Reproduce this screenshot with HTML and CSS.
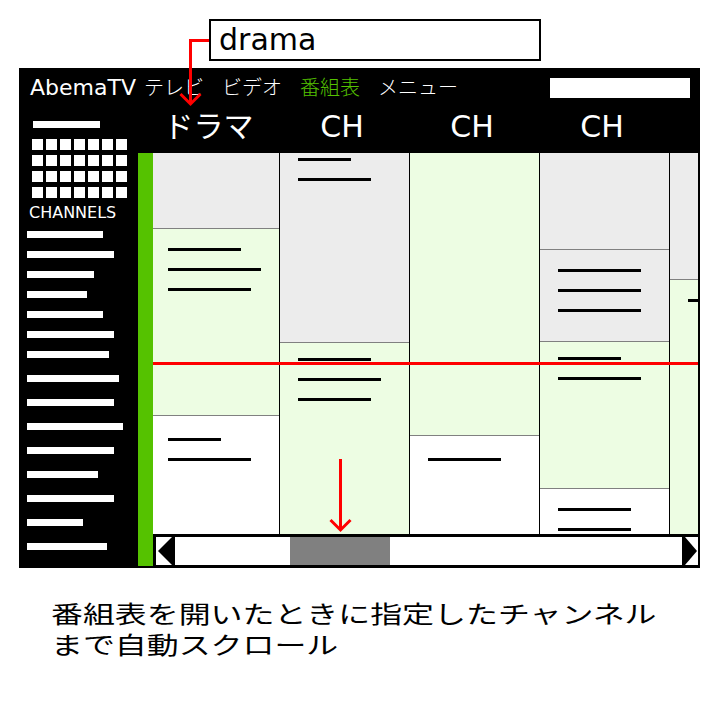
FILE: index.html
```html
<!DOCTYPE html>
<html lang="ja">
<head>
    <meta charset="UTF-8">
    <meta name="viewport" content="width=device-width, initial-scale=1.0">
    <title>番組表 自動スクロール</title>
    <link rel="stylesheet" href="styles.css">
</head>
<body>

<div class="sheet">
    <div class="note">drama</div>

    <div class="frame">
        <header class="topbar">
            <span class="logo">AbemaTV</span>
            <nav class="nav">
                <span>テレビ</span>
                <span>ビデオ</span>
                <span class="on">番組表</span>
                <span>メニュー</span>
            </nav>
            <div class="search"></div>
        </header>

        <div class="body">
            <aside class="side">
                <div class="side-line"></div>
                <div class="side-grid">
                    <span></span><span></span><span></span><span></span><span></span><span></span><span></span>
                    <span></span><span></span><span></span><span></span><span></span><span></span><span></span>
                    <span></span><span></span><span></span><span></span><span></span><span></span><span></span>
                    <span></span><span></span><span></span><span></span><span></span><span></span><span></span>
                </div>
                <div class="side-title">CHANNELS</div>
                <ul class="side-list">
                    <li style="width: 76px"></li>
                    <li style="width: 87px"></li>
                    <li style="width: 67px"></li>
                    <li style="width: 60px"></li>
                    <li style="width: 76px"></li>
                    <li style="width: 87px"></li>
                    <li style="width: 82px"></li>
                </ul>
                <ul class="side-list wide">
                    <li style="width: 92px"></li>
                    <li style="width: 87px"></li>
                    <li style="width: 96px"></li>
                    <li style="width: 87px"></li>
                    <li style="width: 71px"></li>
                    <li style="width: 87px"></li>
                    <li style="width: 56px"></li>
                    <li style="width: 80px"></li>
                </ul>
            </aside>

            <main class="guide">
                <div class="ch-row">
                    <div class="ch first">ドラマ</div>
                    <div class="ch">CH</div>
                    <div class="ch">CH</div>
                    <div class="ch">CH</div>
                </div>

                <div class="guide-body">
                    <div class="strip"></div>
                    <div class="guide-main">
                        <div class="grid">
                            <div class="col first">
                                <div class="prog gray" style="height: 75px"></div>
                                <div class="prog live" style="height: 187px">
                                    <div class="line" style="width: 73px"></div>
                                    <div class="line" style="width: 93px"></div>
                                    <div class="line" style="width: 83px"></div>
                                </div>
                                <div class="prog late">
                                    <div class="line" style="width: 53px"></div>
                                    <div class="line" style="width: 83px"></div>
                                </div>
                            </div>
                            <div class="col">
                                <div class="prog gray cut" style="height: 189px">
                                    <div class="line" style="width: 53px"></div>
                                    <div class="line" style="width: 73px"></div>
                                </div>
                                <div class="prog live early">
                                    <div class="line" style="width: 73px"></div>
                                    <div class="line" style="width: 83px"></div>
                                    <div class="line" style="width: 73px"></div>
                                </div>
                            </div>
                            <div class="col">
                                <div class="prog live" style="height: 282px"></div>
                                <div class="prog late">
                                    <div class="line" style="width: 73px"></div>
                                </div>
                            </div>
                            <div class="col">
                                <div class="prog gray" style="height: 96px"></div>
                                <div class="prog gray" style="height: 92px">
                                    <div class="line" style="width: 83px"></div>
                                    <div class="line" style="width: 83px"></div>
                                    <div class="line" style="width: 83px"></div>
                                </div>
                                <div class="prog live early" style="height: 147px">
                                    <div class="line" style="width: 63px"></div>
                                    <div class="line" style="width: 83px"></div>
                                </div>
                                <div class="prog">
                                    <div class="line" style="width: 73px"></div>
                                    <div class="line" style="width: 73px"></div>
                                </div>
                            </div>
                            <div class="col last">
                                <div class="prog gray" style="height: 126px"></div>
                                <div class="prog live">
                                    <div class="line" style="width: 73px"></div>
                                </div>
                            </div>

                            <div class="now"></div>
                        </div>

                        <div class="scroll">
                            <div class="scroll-btn">
                                <svg width="16" height="28" viewBox="0 0 16 28"><polygon points="16,0 2,14 16,28" fill="#000"/></svg>
                            </div>
                            <div class="track"><div class="thumb"></div></div>
                            <div class="scroll-btn next">
                                <svg width="13" height="28" viewBox="0 0 13 28"><polygon points="0,0 12,14 0,28" fill="#000"/></svg>
                            </div>
                        </div>
                    </div>
                </div>
            </main>
        </div>
    </div>

    <p class="caption">番組表を開いたときに指定したチャンネル<br>まで自動スクロール</p>

    <!-- annotation arrows -->
    <svg class="marks" width="720" height="720" viewBox="0 0 720 720">
        <polyline points="209,40.5 190.5,40.5 190.5,104" fill="none" stroke="#f00" stroke-width="3"/>
        <polyline points="180.5,94 190.5,104 200.5,94" fill="none" stroke="#f00" stroke-width="3"/>
        <line x1="340.5" y1="459" x2="340.5" y2="530" stroke="#f00" stroke-width="3"/>
        <polyline points="330.5,520 340.5,530 350.5,520" fill="none" stroke="#f00" stroke-width="3"/>
    </svg>
</div>

</body>
</html>
```

FILE: styles.css
```css
body {
    margin: 0;
    background-color: #fff;
    color: #000;
    font-family: "DejaVu Sans", "Noto Sans CJK JP", sans-serif;
}
.sheet {
    position: relative;
    width: 720px;
    height: 720px;
    overflow: hidden;
}
.note {
    width: 332px;
    height: 42px;
    box-sizing: border-box;
    margin: 19px 0 0 209px;
    padding-left: 8px;
    border: 2px solid #000;
    font-size: 30px;
    line-height: 38px;
}
.frame {
    width: 681px;
    height: 500px;
    margin: 7px 0 0 19px;
    background-color: #000;
    color: #fff;
    display: flex;
    flex-direction: column;
}
.topbar {
    height: 37px;
    flex-shrink: 0;
    display: flex;
    align-items: center;
    padding-left: 11px;
}
.logo {
    font-size: 22px;
    line-height: 26px;
    margin-top: 2px;
}
.nav {
    display: flex;
    gap: 18px;
    margin-left: 8px;
    font-family: "Noto Sans CJK JP", sans-serif;
    font-weight: 300;
    font-size: 20px;
    line-height: 26px;
}
.nav .on {
    color: #55c200;
}
.search {
    align-self: flex-start;
    width: 140px;
    height: 20px;
    margin: 10px 10px 0 auto;
    background-color: #fff;
}
.body {
    flex: 1;
    display: flex;
}
.side {
    width: 119px;
    display: flex;
    flex-direction: column;
}
.side-line {
    width: 67px;
    height: 7px;
    margin: 16px 0 0 14px;
    background-color: #fff;
}
.side-grid {
    display: grid;
    grid-template-columns: repeat(7, 11px);
    grid-auto-rows: 11px;
    column-gap: 3px;
    row-gap: 5px;
    margin: 11px 0 0 13px;
}
.side-grid span {
    background-color: #fff;
}
.side-title {
    font-size: 16px;
    line-height: 18px;
    margin: 6px 0 0 10px;
}
.side-list {
    list-style: none;
    margin: 9px 0 0 8px;
    padding: 0;
    display: flex;
    flex-direction: column;
    gap: 13px;
}
.side-list li {
    height: 7px;
    background-color: #fff;
}
.side-list.wide {
    margin-top: 17px;
    gap: 17px;
}
.guide {
    flex: 1;
    display: flex;
    flex-direction: column;
}
.ch-row {
    height: 48px;
    display: flex;
}
.ch {
    width: 130px;
    box-sizing: border-box;
    padding-right: 4px;
    text-align: center;
    font-size: 30px;
    line-height: 44px;
}
.ch.first {
    width: 141px;
    padding-right: 0;
}
.guide-body {
    flex: 1;
    display: flex;
}
.strip {
    width: 15px;
    margin-bottom: 2px;
    background-color: #55c200;
}
.guide-main {
    flex: 1;
    margin-right: 2px;
    display: flex;
    flex-direction: column;
}
.grid {
    position: relative;
    height: 381px;
    display: grid;
    grid-template-columns: 127px 130px 130px 130px 28px;
    background-color: #fff;
}
.col {
    display: flex;
    flex-direction: column;
    box-sizing: border-box;
    border-right: 1px solid #000;
    overflow: hidden;
}
.col.last {
    border-right: none;
}
.prog {
    flex-shrink: 0;
    box-sizing: border-box;
    display: flex;
    flex-direction: column;
    gap: 17px;
    padding: 19px 0 0 18px;
    border-top: 1px solid #808080;
}
.prog:first-child {
    border-top: none;
}
.prog:last-child {
    flex: 1;
}
.col.first .prog {
    padding-left: 15px;
}
.prog.gray {
    background-color: #ececec;
}
.prog.live {
    background-color: #edfde3;
}
.prog.cut {
    padding-top: 5px;
}
.prog.early {
    padding-top: 15px;
}
.prog.late {
    padding-top: 22px;
}
.line {
    flex-shrink: 0;
    height: 3px;
    background-color: #000;
}
.now {
    position: absolute;
    left: 0;
    right: 0;
    top: 209px;
    height: 3px;
    background-color: #f00;
}
.scroll {
    height: 34px;
    box-sizing: border-box;
    display: flex;
    border: 3px solid #000;
    border-right: none;
    background-color: #fff;
}
.scroll-btn {
    width: 16px;
    border-right: 3px solid #000;
}
.scroll-btn svg {
    display: block;
}
.scroll-btn.next {
    width: 13px;
    border-right: none;
    border-left: 3px solid #000;
}
.track {
    flex: 1;
}
.thumb {
    width: 100px;
    height: 100%;
    margin-left: 115px;
    background-color: #808080;
}
.caption {
    margin: 29px 0 0 51px;
    font-family: "Noto Sans CJK JP", sans-serif;
    font-size: 24px;
    line-height: 31px;
    white-space: nowrap;
    transform: scaleX(1.33);
    transform-origin: 0 0;
}
.marks {
    position: absolute;
    left: 0;
    top: 0;
    pointer-events: none;
}
```
